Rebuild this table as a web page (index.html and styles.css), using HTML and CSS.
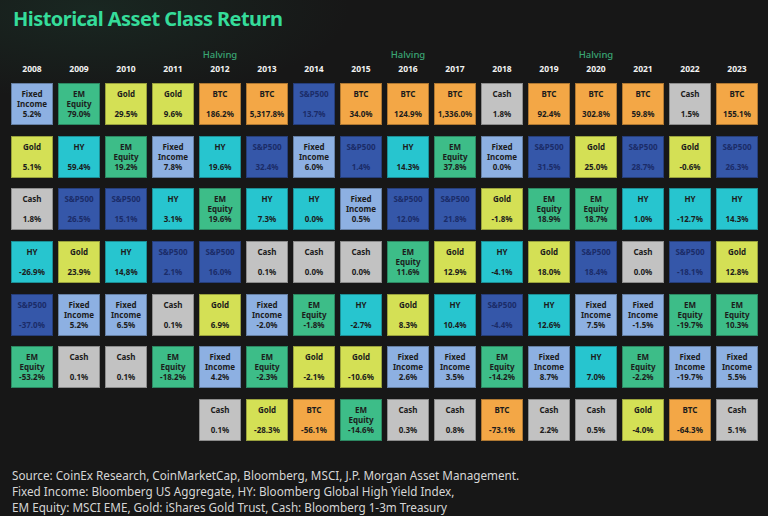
FILE: index.html
```html
<!DOCTYPE html>
<html>
<head>
<meta charset="utf-8">
<title>Historical Asset Class Return</title>
<link rel="stylesheet" href="styles.css">
</head>
<body>
<div class="page">
  <h1 class="title">Historical Asset Class Return</h1>
  <div class="board">
    <div class="col"><div class="halv"></div><div class="year">2008</div>
      <div class="tile fi"><span class="lbl">Fixed<br>Income</span><span class="val">5.2%</span></div>
      <div class="tile gold"><span class="lbl">Gold</span><span class="val">5.1%</span></div>
      <div class="tile cash"><span class="lbl">Cash</span><span class="val">1.8%</span></div>
      <div class="tile hy"><span class="lbl">HY</span><span class="val">-26.9%</span></div>
      <div class="tile sp"><span class="lbl">S&amp;P500</span><span class="val">-37.0%</span></div>
      <div class="tile em"><span class="lbl">EM<br>Equity</span><span class="val">-53.2%</span></div>
    </div>
    <div class="col"><div class="halv"></div><div class="year">2009</div>
      <div class="tile em"><span class="lbl">EM<br>Equity</span><span class="val">79.0%</span></div>
      <div class="tile hy"><span class="lbl">HY</span><span class="val">59.4%</span></div>
      <div class="tile sp"><span class="lbl">S&amp;P500</span><span class="val">26.5%</span></div>
      <div class="tile gold"><span class="lbl">Gold</span><span class="val">23.9%</span></div>
      <div class="tile fi"><span class="lbl">Fixed<br>Income</span><span class="val">5.2%</span></div>
      <div class="tile cash"><span class="lbl">Cash</span><span class="val">0.1%</span></div>
    </div>
    <div class="col"><div class="halv"></div><div class="year">2010</div>
      <div class="tile gold"><span class="lbl">Gold</span><span class="val">29.5%</span></div>
      <div class="tile em"><span class="lbl">EM<br>Equity</span><span class="val">19.2%</span></div>
      <div class="tile sp"><span class="lbl">S&amp;P500</span><span class="val">15.1%</span></div>
      <div class="tile hy"><span class="lbl">HY</span><span class="val">14,8%</span></div>
      <div class="tile fi"><span class="lbl">Fixed<br>Income</span><span class="val">6.5%</span></div>
      <div class="tile cash"><span class="lbl">Cash</span><span class="val">0.1%</span></div>
    </div>
    <div class="col"><div class="halv"></div><div class="year">2011</div>
      <div class="tile gold"><span class="lbl">Gold</span><span class="val">9.6%</span></div>
      <div class="tile fi"><span class="lbl">Fixed<br>Income</span><span class="val">7.8%</span></div>
      <div class="tile hy"><span class="lbl">HY</span><span class="val">3.1%</span></div>
      <div class="tile sp"><span class="lbl">S&amp;P500</span><span class="val">2.1%</span></div>
      <div class="tile cash"><span class="lbl">Cash</span><span class="val">0.1%</span></div>
      <div class="tile em"><span class="lbl">EM<br>Equity</span><span class="val">-18.2%</span></div>
    </div>
    <div class="col"><div class="halv">Halving</div><div class="year">2012</div>
      <div class="tile btc"><span class="lbl">BTC</span><span class="val">186.2%</span></div>
      <div class="tile hy"><span class="lbl">HY</span><span class="val">19.6%</span></div>
      <div class="tile em"><span class="lbl">EM<br>Equity</span><span class="val">19.6%</span></div>
      <div class="tile sp"><span class="lbl">S&amp;P500</span><span class="val">16.0%</span></div>
      <div class="tile gold"><span class="lbl">Gold</span><span class="val">6.9%</span></div>
      <div class="tile fi"><span class="lbl">Fixed<br>Income</span><span class="val">4.2%</span></div>
      <div class="tile cash"><span class="lbl">Cash</span><span class="val">0.1%</span></div>
    </div>
    <div class="col"><div class="halv"></div><div class="year">2013</div>
      <div class="tile btc"><span class="lbl">BTC</span><span class="val">5,317.8%</span></div>
      <div class="tile sp"><span class="lbl">S&amp;P500</span><span class="val">32.4%</span></div>
      <div class="tile hy"><span class="lbl">HY</span><span class="val">7.3%</span></div>
      <div class="tile cash"><span class="lbl">Cash</span><span class="val">0.1%</span></div>
      <div class="tile fi"><span class="lbl">Fixed<br>Income</span><span class="val">-2.0%</span></div>
      <div class="tile em"><span class="lbl">EM<br>Equity</span><span class="val">-2.3%</span></div>
      <div class="tile gold"><span class="lbl">Gold</span><span class="val">-28.3%</span></div>
    </div>
    <div class="col"><div class="halv"></div><div class="year">2014</div>
      <div class="tile sp"><span class="lbl">S&amp;P500</span><span class="val">13.7%</span></div>
      <div class="tile fi"><span class="lbl">Fixed<br>Income</span><span class="val">6.0%</span></div>
      <div class="tile hy"><span class="lbl">HY</span><span class="val">0.0%</span></div>
      <div class="tile cash"><span class="lbl">Cash</span><span class="val">0.0%</span></div>
      <div class="tile em"><span class="lbl">EM<br>Equity</span><span class="val">-1.8%</span></div>
      <div class="tile gold"><span class="lbl">Gold</span><span class="val">-2.1%</span></div>
      <div class="tile btc"><span class="lbl">BTC</span><span class="val">-56.1%</span></div>
    </div>
    <div class="col"><div class="halv"></div><div class="year">2015</div>
      <div class="tile btc"><span class="lbl">BTC</span><span class="val">34.0%</span></div>
      <div class="tile sp"><span class="lbl">S&amp;P500</span><span class="val">1.4%</span></div>
      <div class="tile fi"><span class="lbl">Fixed<br>Income</span><span class="val">0.5%</span></div>
      <div class="tile cash"><span class="lbl">Cash</span><span class="val">0.0%</span></div>
      <div class="tile hy"><span class="lbl">HY</span><span class="val">-2.7%</span></div>
      <div class="tile gold"><span class="lbl">Gold</span><span class="val">-10.6%</span></div>
      <div class="tile em"><span class="lbl">EM<br>Equity</span><span class="val">-14.6%</span></div>
    </div>
    <div class="col"><div class="halv">Halving</div><div class="year">2016</div>
      <div class="tile btc"><span class="lbl">BTC</span><span class="val">124.9%</span></div>
      <div class="tile hy"><span class="lbl">HY</span><span class="val">14.3%</span></div>
      <div class="tile sp"><span class="lbl">S&amp;P500</span><span class="val">12.0%</span></div>
      <div class="tile em"><span class="lbl">EM<br>Equity</span><span class="val">11.6%</span></div>
      <div class="tile gold"><span class="lbl">Gold</span><span class="val">8.3%</span></div>
      <div class="tile fi"><span class="lbl">Fixed<br>Income</span><span class="val">2.6%</span></div>
      <div class="tile cash"><span class="lbl">Cash</span><span class="val">0.3%</span></div>
    </div>
    <div class="col"><div class="halv"></div><div class="year">2017</div>
      <div class="tile btc"><span class="lbl">BTC</span><span class="val">1,336.0%</span></div>
      <div class="tile em"><span class="lbl">EM<br>Equity</span><span class="val">37.8%</span></div>
      <div class="tile sp"><span class="lbl">S&amp;P500</span><span class="val">21.8%</span></div>
      <div class="tile gold"><span class="lbl">Gold</span><span class="val">12.9%</span></div>
      <div class="tile hy"><span class="lbl">HY</span><span class="val">10.4%</span></div>
      <div class="tile fi"><span class="lbl">Fixed<br>Income</span><span class="val">3.5%</span></div>
      <div class="tile cash"><span class="lbl">Cash</span><span class="val">0.8%</span></div>
    </div>
    <div class="col"><div class="halv"></div><div class="year">2018</div>
      <div class="tile cash"><span class="lbl">Cash</span><span class="val">1.8%</span></div>
      <div class="tile fi"><span class="lbl">Fixed<br>Income</span><span class="val">0.0%</span></div>
      <div class="tile gold"><span class="lbl">Gold</span><span class="val">-1.8%</span></div>
      <div class="tile hy"><span class="lbl">HY</span><span class="val">-4.1%</span></div>
      <div class="tile sp"><span class="lbl">S&amp;P500</span><span class="val">-4.4%</span></div>
      <div class="tile em"><span class="lbl">EM<br>Equity</span><span class="val">-14.2%</span></div>
      <div class="tile btc"><span class="lbl">BTC</span><span class="val">-73.1%</span></div>
    </div>
    <div class="col"><div class="halv"></div><div class="year">2019</div>
      <div class="tile btc"><span class="lbl">BTC</span><span class="val">92.4%</span></div>
      <div class="tile sp"><span class="lbl">S&amp;P500</span><span class="val">31.5%</span></div>
      <div class="tile em"><span class="lbl">EM<br>Equity</span><span class="val">18.9%</span></div>
      <div class="tile gold"><span class="lbl">Gold</span><span class="val">18.0%</span></div>
      <div class="tile hy"><span class="lbl">HY</span><span class="val">12.6%</span></div>
      <div class="tile fi"><span class="lbl">Fixed<br>Income</span><span class="val">8.7%</span></div>
      <div class="tile cash"><span class="lbl">Cash</span><span class="val">2.2%</span></div>
    </div>
    <div class="col"><div class="halv">Halving</div><div class="year">2020</div>
      <div class="tile btc"><span class="lbl">BTC</span><span class="val">302.8%</span></div>
      <div class="tile gold"><span class="lbl">Gold</span><span class="val">25.0%</span></div>
      <div class="tile em"><span class="lbl">EM<br>Equity</span><span class="val">18.7%</span></div>
      <div class="tile sp"><span class="lbl">S&amp;P500</span><span class="val">18.4%</span></div>
      <div class="tile fi"><span class="lbl">Fixed<br>Income</span><span class="val">7.5%</span></div>
      <div class="tile hy"><span class="lbl">HY</span><span class="val">7.0%</span></div>
      <div class="tile cash"><span class="lbl">Cash</span><span class="val">0.5%</span></div>
    </div>
    <div class="col"><div class="halv"></div><div class="year">2021</div>
      <div class="tile btc"><span class="lbl">BTC</span><span class="val">59.8%</span></div>
      <div class="tile sp"><span class="lbl">S&amp;P500</span><span class="val">28.7%</span></div>
      <div class="tile hy"><span class="lbl">HY</span><span class="val">1.0%</span></div>
      <div class="tile cash"><span class="lbl">Cash</span><span class="val">0.0%</span></div>
      <div class="tile fi"><span class="lbl">Fixed<br>Income</span><span class="val">-1.5%</span></div>
      <div class="tile em"><span class="lbl">EM<br>Equity</span><span class="val">-2.2%</span></div>
      <div class="tile gold"><span class="lbl">Gold</span><span class="val">-4.0%</span></div>
    </div>
    <div class="col"><div class="halv"></div><div class="year">2022</div>
      <div class="tile cash"><span class="lbl">Cash</span><span class="val">1.5%</span></div>
      <div class="tile gold"><span class="lbl">Gold</span><span class="val">-0.6%</span></div>
      <div class="tile hy"><span class="lbl">HY</span><span class="val">-12.7%</span></div>
      <div class="tile sp"><span class="lbl">S&amp;P500</span><span class="val">-18.1%</span></div>
      <div class="tile em"><span class="lbl">EM<br>Equity</span><span class="val">-19.7%</span></div>
      <div class="tile fi"><span class="lbl">Fixed<br>Income</span><span class="val">-19.7%</span></div>
      <div class="tile btc"><span class="lbl">BTC</span><span class="val">-64.3%</span></div>
    </div>
    <div class="col"><div class="halv"></div><div class="year">2023</div>
      <div class="tile btc"><span class="lbl">BTC</span><span class="val">155.1%</span></div>
      <div class="tile sp"><span class="lbl">S&amp;P500</span><span class="val">26.3%</span></div>
      <div class="tile hy"><span class="lbl">HY</span><span class="val">14.3%</span></div>
      <div class="tile gold"><span class="lbl">Gold</span><span class="val">12.8%</span></div>
      <div class="tile em"><span class="lbl">EM<br>Equity</span><span class="val">10.3%</span></div>
      <div class="tile fi"><span class="lbl">Fixed<br>Income</span><span class="val">5.5%</span></div>
      <div class="tile cash"><span class="lbl">Cash</span><span class="val">5.1%</span></div>
    </div>
  </div>
  <p class="notes">Source: CoinEx Research, CoinMarketCap, Bloomberg, MSCI, J.P. Morgan Asset Management.<br>Fixed Income: Bloomberg US Aggregate, HY: Bloomberg Global High Yield Index,<br>EM Equity: MSCI EME, Gold: iShares Gold Trust, Cash: Bloomberg 1-3m Treasury</p>
</div>
</body>
</html>
```
FILE: styles.css
```css
html, body {
  margin: 0;
  padding: 0;
}
body {
  width: 768px;
  height: 516px;
  overflow: hidden;
  background: #171717;
  font-family: "Noto Sans", "Open Sans", sans-serif;
}
.page {
  height: 516px;
  padding: 7px 0 0 11px;
  box-sizing: border-box;
  background: radial-gradient(ellipse 260px 90px at 90px 10px, rgba(30, 80, 60, 0.28), rgba(23, 23, 23, 0));
}
.title {
  margin: 0 0 0 2px;
  font-size: 20px;
  line-height: 24px;
  font-weight: 700;
  color: #35dc9a;
  letter-spacing: -0.55px;
}
.board {
  display: flex;
  gap: 5px;
  margin-top: 17px;
}
.col {
  width: 42px;
  display: flex;
  flex-direction: column;
  gap: 10.67px;
}
.halv {
  height: 14px;
  line-height: 14px;
  margin-bottom: -10.67px;
  text-align: center;
  font-size: 9.5px;
  font-weight: 500;
  color: #3aa675;
}
.year {
  height: 14px;
  line-height: 14px;
  margin-bottom: -3.67px;
  text-align: center;
  font-size: 8.5px;
  font-weight: 700;
  color: #f2f2f2;
}
.tile {
  height: 42px;
  box-sizing: border-box;
  padding-top: 6px;
  display: flex;
  flex-direction: column;
  align-items: center;
  text-align: center;
  font-size: 8px;
  line-height: 10px;
  font-weight: 700;
  color: #1c1c1c;
  box-shadow: inset 0 0 0 1px rgba(0, 0, 0, 0.28);
  white-space: nowrap;
}
.lbl {
  height: 20px;
}
.fi { background: #8db0e2; }
.em { background: #3dbd88; }
.gold { background: #d4e055; }
.btc { background: #f3a746; }
.cash { background: #c2c2c2; }
.hy { background: #27c5cf; }
.sp { background: #3557a9; color: #1b2c68; }
.notes {
  margin: 26px 0 0 1px;
  font-size: 11.7px;
  line-height: 16px;
  color: #d6d6d6;
}
```
